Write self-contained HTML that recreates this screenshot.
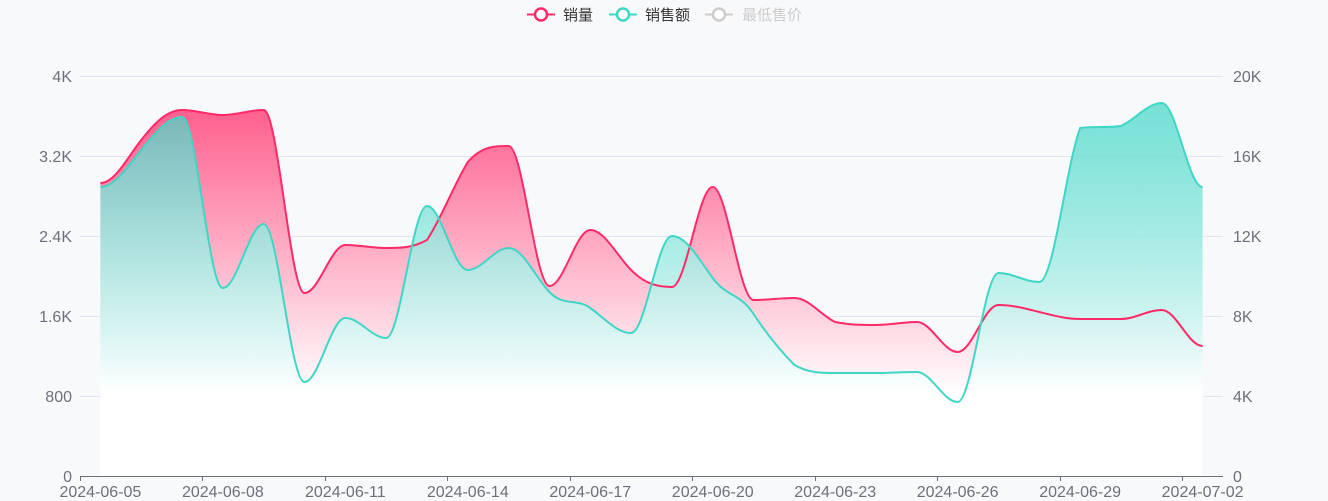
<!DOCTYPE html>
<html><head><meta charset="utf-8"><style>
html,body{margin:0;padding:0;background:#f8f9fb;}
svg{display:block;font-family:"Liberation Sans","Noto Sans CJK SC",sans-serif;}
</style></head><body>
<svg id="c" width="1328" height="501" viewBox="0 0 1328 501" xmlns="http://www.w3.org/2000/svg">
<defs>
<linearGradient id="gp" x1="0" y1="108" x2="0" y2="476" gradientUnits="userSpaceOnUse">
<stop offset="0" stop-color="#ff5f8d"/><stop offset="0.78" stop-color="#ffffff"/><stop offset="1" stop-color="#ffffff"/></linearGradient>
<linearGradient id="gt" x1="0" y1="103" x2="0" y2="476" gradientUnits="userSpaceOnUse">
<stop offset="0" stop-color="rgb(63,214,198)" stop-opacity="0.7"/><stop offset="0.78" stop-color="#ffffff" stop-opacity="1"/><stop offset="1" stop-color="#ffffff"/></linearGradient>
</defs>
<g stroke="#e0e6f1" stroke-width="1">
<line x1="80" x2="1223" y1="76.5" y2="76.5"/><line x1="80" x2="1223" y1="156.5" y2="156.5"/>
<line x1="80" x2="1223" y1="236.5" y2="236.5"/><line x1="80" x2="1223" y1="316.5" y2="316.5"/>
<line x1="80" x2="1223" y1="396.5" y2="396.5"/>
</g>
<path id="pa" fill="url(#gp)"/>
<path id="ta" fill="url(#gt)"/>
<path id="pl" fill="none" stroke="#ff2a68" stroke-width="2"/>
<path id="tl" fill="none" stroke="#3fd6c6" stroke-width="2"/>
<line x1="80" x2="1223" y1="476.5" y2="476.5" stroke="#6e7079"/>
<g id="ticks" stroke="#6e7079"></g>
<g fill="#6e7079" font-size="16" text-anchor="end">
<text x="72" y="82">4K</text><text x="72" y="162">3.2K</text><text x="72" y="242">2.4K</text>
<text x="72" y="322">1.6K</text><text x="72" y="402">800</text><text x="72" y="482">0</text>
</g>
<g fill="#6e7079" font-size="16" text-anchor="start">
<text x="1233" y="82">20K</text><text x="1233" y="162">16K</text><text x="1233" y="242">12K</text>
<text x="1233" y="322">8K</text><text x="1233" y="402">4K</text><text x="1233" y="482">0</text>
</g>
<g id="xl" fill="#6e7079" font-size="16" text-anchor="middle"></g>
<g font-size="15">
<line x1="527" x2="555" y1="14.5" y2="14.5" stroke="#ff2a68" stroke-width="2"/>
<circle cx="541" cy="14.5" r="6" fill="#fff" stroke="#ff2a68" stroke-width="2.5"/>
<text x="563" y="20" fill="#333">销量</text>
<line x1="609" x2="637" y1="14.5" y2="14.5" stroke="#3fd6c6" stroke-width="2"/>
<circle cx="623" cy="14.5" r="6" fill="#fff" stroke="#3fd6c6" stroke-width="2.5"/>
<text x="645" y="20" fill="#333">销售额</text>
<line x1="705" x2="733" y1="14.5" y2="14.5" stroke="#ccc" stroke-width="2"/>
<circle cx="719" cy="14.5" r="6" fill="#fff" stroke="#ccc" stroke-width="2.5"/>
<text x="742" y="20" fill="#ccc">最低售价</text>
</g>
</svg>
<script>
var X0=80,W=1143,N=28,step=W/N;
var P=[183,140,110,115,110,293,245,248,240,162,146,286,230,270,287,187,300,298,322,325,322,352,305,312,319,319,310,346];
var T=[187,150,117,288,224,382,318,338,206,270,248,292,308,333,236,278,314,365,373,373,372,402,273,282,128,126,103,187];
function xs(i){return X0+step/2+i*step;}
function path(Y){
 var d="M"+xs(0)+","+Y[0];
 for(var i=0;i<Y.length-1;i++){
  var x1=xs(i),x2=xs(i+1),y1=Y[i],y2=Y[i+1];
  var y0=i>0?Y[i-1]:y1,y3=i<Y.length-2?Y[i+2]:y2;
  var s=0.5;
  var c1y=y1+(y2-y0)*s/2,c2y=y2-(y3-y1)*s/2;
  var lo=Math.min(y1,y2),hi=Math.max(y1,y2);
  if((y1-y0)*(y2-y1)<=0)c1y=y1; if((y2-y1)*(y3-y2)<=0)c2y=y2;
  c1y=Math.max(lo,Math.min(hi,c1y));c2y=Math.max(lo,Math.min(hi,c2y));
  d+=" C"+(x1+step*s*0.7)+","+c1y+" "+(x2-step*s*0.7)+","+c2y+" "+x2+","+y2;
 }
 return d;
}
var pp=path(P),tp=path(T),end=" L"+xs(N-1)+",476 L"+xs(0)+",476 Z";
document.getElementById("pl").setAttribute("d",pp);
document.getElementById("tl").setAttribute("d",tp);
document.getElementById("pa").setAttribute("d",pp+end);
document.getElementById("ta").setAttribute("d",tp+end);
var labels=["2024-06-05","2024-06-08","2024-06-11","2024-06-14","2024-06-17","2024-06-20","2024-06-23","2024-06-26","2024-06-29","2024-07-02"];
var xl=document.getElementById("xl"),tk=document.getElementById("ticks"),ns="http://www.w3.org/2000/svg";
for(var k=0;k<10;k++){
 var tx=Math.round(X0+k*3*step)+0.5;
 var lx=xs(k*3);
 var t=document.createElementNS(ns,"text");t.setAttribute("x",lx);t.setAttribute("y",497);t.textContent=labels[k];xl.appendChild(t);
 var l=document.createElementNS(ns,"line");l.setAttribute("x1",tx);l.setAttribute("x2",tx);l.setAttribute("y1",476);l.setAttribute("y2",481);tk.appendChild(l);
}
</script>
</body></html>
